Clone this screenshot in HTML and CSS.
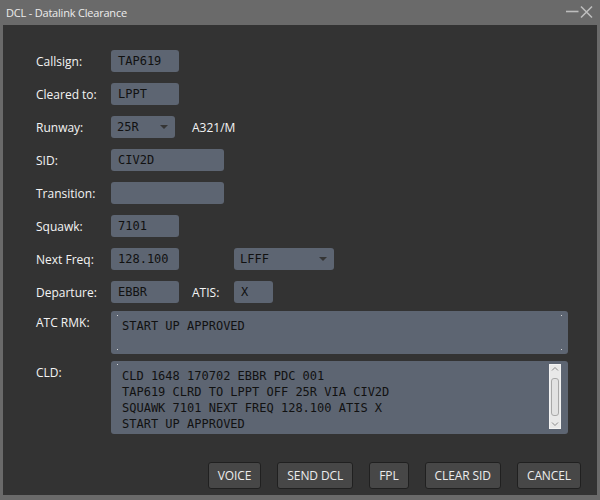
FILE: index.html
```html
<!DOCTYPE html>
<html>
<head>
<meta charset="utf-8">
<title>DCL - Datalink Clearance</title>
<link rel="stylesheet" href="styles.css">
</head>
<body>
<div class="window">
  <div class="titlebar">
    <span class="title">DCL - Datalink Clearance</span>
    <div class="winctl">
      <svg class="ico-min" width="13" height="14" viewBox="0 0 13 14"><path d="M0 6.5H12.5" stroke="#bdbdbd" stroke-width="1.6"/></svg>
      <svg class="ico-close" width="13" height="14" viewBox="0 0 13 14"><path d="M1 1.5L12 12.5M12 1.5L1 12.5" stroke="#bdbdbd" stroke-width="1.6"/></svg>
    </div>
  </div>
  <div class="content">
    <div class="form">
      <div class="row"><span class="label">Callsign:</span><div class="field w-short">TAP619</div></div>
      <div class="row"><span class="label">Cleared to:</span><div class="field w-short">LPPT</div></div>
      <div class="row"><span class="label">Runway:</span><div class="field select w-rwy">25R<span class="caret"></span></div><span class="info">A321/M</span></div>
      <div class="row"><span class="label">SID:</span><div class="field w-wide">CIV2D</div></div>
      <div class="row"><span class="label">Transition:</span><div class="field w-wide"></div></div>
      <div class="row"><span class="label">Squawk:</span><div class="field w-short">7101</div></div>
      <div class="row"><span class="label">Next Freq:</span><div class="field w-short">128.100</div><div class="field select w-freq">LFFF<span class="caret"></span></div></div>
      <div class="row"><span class="label">Departure:</span><div class="field w-short">EBBR</div><span class="label-atis">ATIS:</span><div class="field w-atis">X</div></div>
    </div>
    <div class="areas">
      <div class="arow"><span class="label alabel">ATC RMK:</span><div class="tbox rmk">START UP APPROVED</div></div>
      <div class="arow"><span class="label alabel">CLD:</span>
        <div class="tbox cld">
          <div class="cldtext">CLD 1648 170702 EBBR PDC 001<br>TAP619 CLRD TO LPPT OFF 25R VIA CIV2D<br>SQUAWK 7101 NEXT FREQ 128.100 ATIS X<br>START UP APPROVED</div>
          <div class="scrollbar">
            <svg class="arrow" width="10" height="6" viewBox="0 0 10 6"><path d="M2 4.5L5 1.5L8 4.5" fill="none" stroke="#8a8a8a" stroke-width="1"/></svg>
            <div class="thumb"></div>
            <svg class="arrow" width="10" height="6" viewBox="0 0 10 6"><path d="M2 1.5L5 4.5L8 1.5" fill="none" stroke="#8a8a8a" stroke-width="1"/></svg>
          </div>
        </div>
      </div>
    </div>
    <div class="buttons">
      <button class="btn">VOICE</button>
      <button class="btn">SEND DCL</button>
      <button class="btn">FPL</button>
      <button class="btn">CLEAR SID</button>
      <button class="btn">CANCEL</button>
    </div>
  </div>
</div>
</body>
</html>
```
FILE: styles.css
```css
html, body {
  margin: 0;
  padding: 0;
  background: #6a6a6a;
}
.window {
  width: 600px;
  height: 500px;
  display: flex;
  flex-direction: column;
  background: #6a6a6a;
  font-family: "Open Sans", "Noto Sans", sans-serif;
}
.titlebar {
  height: 25px;
  display: flex;
  align-items: center;
  justify-content: space-between;
  padding: 0 7px 0 6px;
}
.title {
  color: #ececec;
  font-size: 11px;
  letter-spacing: -0.2px;
}
.winctl {
  display: flex;
  align-items: center;
  gap: 1px;
  margin-top: -1px;
}
.content {
  flex: 1;
  margin: 0 3px 5px 3px;
  background: #333333;
  padding: 25px 16px 0 33px;
  display: flex;
  flex-direction: column;
}
.form {
  display: flex;
  flex-direction: column;
  gap: 11px;
}
.row {
  display: flex;
  align-items: center;
  height: 22px;
}
.label {
  width: 75px;
  flex: none;
  color: #f4f4f4;
  font-size: 12px;
}
.field {
  height: 22px;
  box-sizing: border-box;
  background: #5d6572;
  border-radius: 3px;
  padding: 0 7px;
  font-family: "DejaVu Sans Mono", monospace;
  font-size: 12px;
  line-height: 22px;
  color: #111111;
  position: relative;
}
.select { padding-left: 6px; }
.w-short { width: 68px; }
.w-wide { width: 113px; }
.w-rwy { width: 64px; }
.w-freq { width: 100px; margin-left: 55px; }
.w-atis { width: 39px; }
.caret {
  position: absolute;
  right: 7px;
  top: 9px;
  width: 0;
  height: 0;
  border-left: 4px solid transparent;
  border-right: 4px solid transparent;
  border-top: 4px solid #353535;
}
.info {
  margin-left: 17px;
  color: #f4f4f4;
  font-size: 12px;
}
.label-atis {
  margin-left: 13px;
  width: 42px;
  color: #f4f4f4;
  font-size: 12px;
}
.areas {
  margin-top: 8px;
  margin-right: 13px;
  display: flex;
  flex-direction: column;
  gap: 7px;
}
.arow {
  display: flex;
  align-items: flex-start;
}
.alabel {
  padding-top: 4px;
  line-height: 16px;
}
.tbox {
  flex: 1;
  box-sizing: border-box;
  background-color: #5d6572;
  border-radius: 3px;
  font-family: "DejaVu Sans Mono", monospace;
  font-size: 12px;
  line-height: 16px;
  color: #111111;
  background-repeat: no-repeat;
  background-size: 1px 1px;
}
.rmk {
  height: 43px;
  padding: 7px 11px;
  background-image:
    linear-gradient(#d8d8d8, #d8d8d8),
    linear-gradient(#d8d8d8, #d8d8d8),
    linear-gradient(#d8d8d8, #d8d8d8),
    linear-gradient(#d8d8d8, #d8d8d8);
  background-position: left 6px top 4px, right 6px top 4px, left 6px bottom 4px, right 6px bottom 4px;
}
.cld {
  height: 73px;
  display: flex;
  padding: 3px 7px 5px 11px;
  overflow: hidden;
  background-image: linear-gradient(#d8d8d8, #d8d8d8);
  background-position: left 6px top 3px;
}
.cldtext {
  flex: 1;
  padding-top: 4px;
  white-space: nowrap;
}
.scrollbar {
  width: 12px;
  flex: none;
  box-sizing: border-box;
  background: #e8e8e8;
  border: 1px solid #f3f3f3;
  display: flex;
  flex-direction: column;
  align-items: center;
  justify-content: space-between;
  padding: 1px 0;
}
.arrow { display: block; }
.thumb {
  width: 8px;
  height: 38px;
  box-sizing: border-box;
  border: 1px solid #a8a8a8;
  border-radius: 3px;
  background: #e2e2e2;
}
.buttons {
  margin-top: 28px;
  display: flex;
  justify-content: flex-end;
  gap: 16px;
}
.btn {
  height: 27px;
  box-sizing: border-box;
  padding: 0 9px;
  background: #474747;
  border: 1px solid #202020;
  border-radius: 3px;
  color: #ececec;
  font-family: "Open Sans", "Noto Sans", sans-serif;
  font-size: 12px;
  letter-spacing: -0.1px;
  line-height: 25px;
}
```
